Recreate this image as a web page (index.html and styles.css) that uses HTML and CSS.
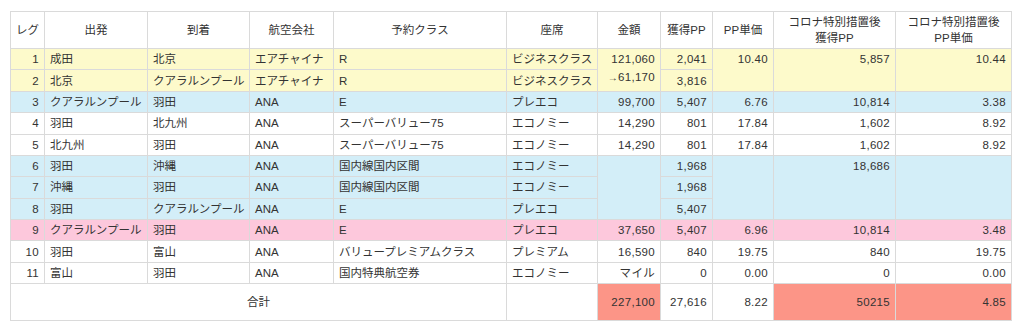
FILE: index.html
```html
<!DOCTYPE html>
<html lang="ja">
<head>
<meta charset="utf-8">
<title>PP単価</title>
<link rel="stylesheet" href="styles.css">
</head>
<body>
<div class="wrap">
<table class="pp">
  <colgroup>
    <col class="c-leg"><col class="c-from"><col class="c-to"><col class="c-air"><col class="c-cls"><col class="c-seat"><col class="c-fare"><col class="c-pp"><col class="c-unit"><col class="c-cpp"><col class="c-cunit">
  </colgroup>
  <thead>
    <tr>
      <th>レグ</th><th>出発</th><th>到着</th><th>航空会社</th><th>予約クラス</th><th>座席</th><th>金額</th><th>獲得PP</th><th>PP単価</th><th>コロナ特別措置後<br>獲得PP</th><th>コロナ特別措置後<br>PP単価</th>
    </tr>
  </thead>
  <tbody>
    <tr class="yellow">
      <td class="r">1</td><td>成田</td><td>北京</td><td>エアチャイナ</td><td>R</td><td>ビジネスクラス</td><td class="r" rowspan="2">121,060<br><span class="arrow">→</span>61,170</td><td class="r">2,041</td><td class="r" rowspan="2">10.40</td><td class="r" rowspan="2">5,857</td><td class="r" rowspan="2">10.44</td>
    </tr>
    <tr class="yellow">
      <td class="r">2</td><td>北京</td><td>クアラルンプール</td><td>エアチャイナ</td><td>R</td><td>ビジネスクラス</td><td class="r">3,816</td>
    </tr>
    <tr class="blue">
      <td class="r">3</td><td>クアラルンプール</td><td>羽田</td><td>ANA</td><td>E</td><td>プレエコ</td><td class="r">99,700</td><td class="r">5,407</td><td class="r">6.76</td><td class="r">10,814</td><td class="r">3.38</td>
    </tr>
    <tr>
      <td class="r">4</td><td>羽田</td><td>北九州</td><td>ANA</td><td>スーパーバリュー75</td><td>エコノミー</td><td class="r">14,290</td><td class="r">801</td><td class="r">17.84</td><td class="r">1,602</td><td class="r">8.92</td>
    </tr>
    <tr>
      <td class="r">5</td><td>北九州</td><td>羽田</td><td>ANA</td><td>スーパーバリュー75</td><td>エコノミー</td><td class="r">14,290</td><td class="r">801</td><td class="r">17.84</td><td class="r">1,602</td><td class="r">8.92</td>
    </tr>
    <tr class="blue">
      <td class="r">6</td><td>羽田</td><td>沖縄</td><td>ANA</td><td>国内線国内区間</td><td>エコノミー</td><td class="r" rowspan="3"></td><td class="r">1,968</td><td class="r" rowspan="3"></td><td class="r" rowspan="3">18,686</td><td class="r" rowspan="3"></td>
    </tr>
    <tr class="blue">
      <td class="r">7</td><td>沖縄</td><td>羽田</td><td>ANA</td><td>国内線国内区間</td><td>エコノミー</td><td class="r">1,968</td>
    </tr>
    <tr class="blue">
      <td class="r">8</td><td>羽田</td><td>クアラルンプール</td><td>ANA</td><td>E</td><td>プレエコ</td><td class="r">5,407</td>
    </tr>
    <tr class="pink">
      <td class="r">9</td><td>クアラルンプール</td><td>羽田</td><td>ANA</td><td>E</td><td>プレエコ</td><td class="r">37,650</td><td class="r">5,407</td><td class="r">6.96</td><td class="r">10,814</td><td class="r">3.48</td>
    </tr>
    <tr>
      <td class="r">10</td><td>羽田</td><td>富山</td><td>ANA</td><td>バリュープレミアムクラス</td><td>プレミアム</td><td class="r">16,590</td><td class="r">840</td><td class="r">19.75</td><td class="r">840</td><td class="r">19.75</td>
    </tr>
    <tr>
      <td class="r">11</td><td>富山</td><td>羽田</td><td>ANA</td><td>国内特典航空券</td><td>エコノミー</td><td class="r">マイル</td><td class="r">0</td><td class="r">0.00</td><td class="r">0</td><td class="r">0.00</td>
    </tr>
    <tr class="total">
      <td class="c" colspan="5">合計</td><td></td><td class="r hot">227,100</td><td class="r">27,616</td><td class="r">8.22</td><td class="r hot">50215</td><td class="r hot">4.85</td>
    </tr>
  </tbody>
</table>
</div>
</body>
</html>
```

FILE: styles.css
```css
html, body {
  margin: 0;
  padding: 0;
  background: #ffffff;
}

.wrap {
  padding: 11px 0 0 10px;
}

.pp {
  width: 1001px;
  border-collapse: collapse;
  table-layout: fixed;
  font-family: "Liberation Sans", "Noto Sans CJK JP", sans-serif;
  font-size: 11.5px;
  color: #333333;
}

.c-leg { width: 34px; }
.c-from { width: 103px; }
.c-to { width: 102px; }
.c-air { width: 84px; }
.c-cls { width: 173px; }
.c-seat { width: 91px; }
.c-fare { width: 63px; }
.c-pp { width: 52px; }
.c-unit { width: 61px; }
.c-cpp { width: 122px; }
.c-cunit { width: 116px; }

.pp th,
.pp td {
  border: 1px solid #dadada;
  white-space: nowrap;
  overflow: hidden;
}

.pp th {
  font-weight: normal;
  line-height: 16px;
  padding: 2px 4px;
  text-align: center;
  vertical-align: middle;
  background: #ffffff;
}

.pp td {
  line-height: 18px;
  padding: 1.2px 5px;
  text-align: left;
  vertical-align: top;
  background: #ffffff;
}

.pp td.r {
  text-align: right;
  letter-spacing: 0.3px;
}

.pp td.c {
  text-align: center;
}

.pp tr.yellow td { background: #fdfacb; }
.pp tr.blue td { background: #d3eef8; }
.pp tr.pink td { background: #fdc8dc; }

.pp tr.total td {
  height: 33px;
  vertical-align: middle;
}

.pp tr.total td.hot { background: #fc9587; }

.arrow {
  font-size: 10px;
}
```
